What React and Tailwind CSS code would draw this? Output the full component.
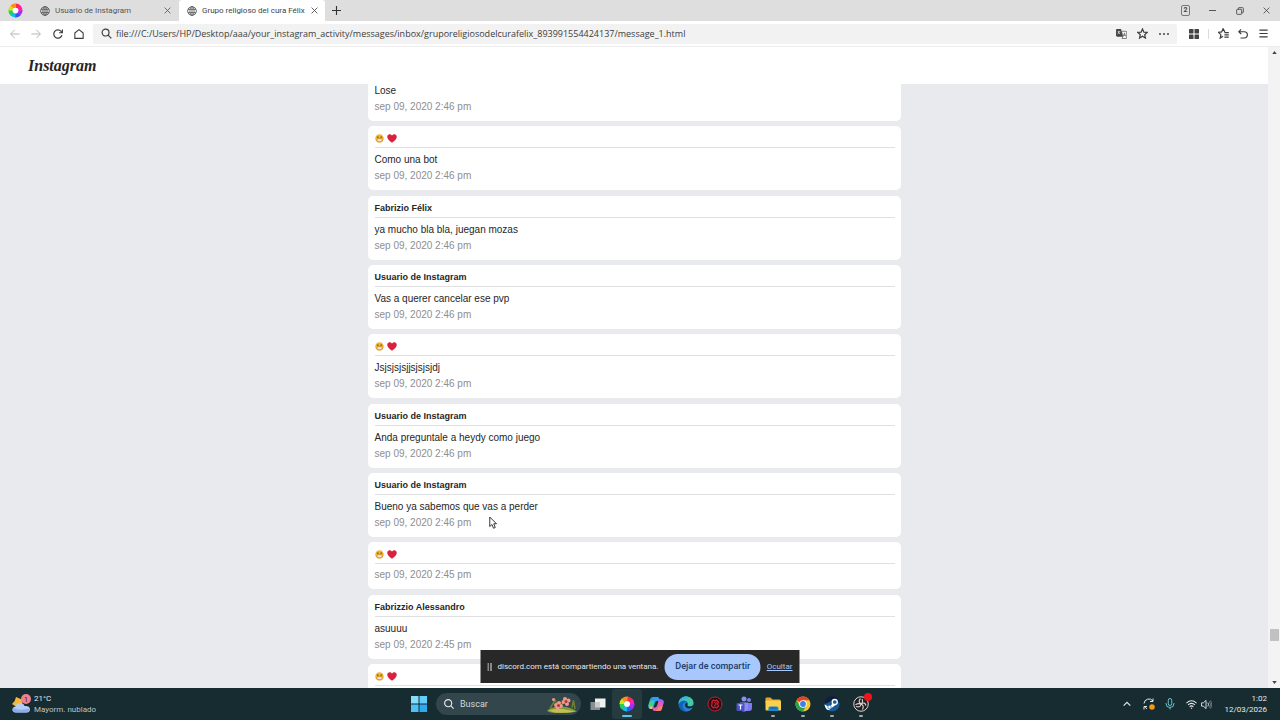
import React from "react";

const messages = [
  { text: "Lose", date: "sep 09, 2020 2:46 pm" },
  { sender: "😀❤", text: "Como una bot", date: "sep 09, 2020 2:46 pm" },
  { sender: "Fabrizio Félix", text: "ya mucho bla bla, juegan mozas", date: "sep 09, 2020 2:46 pm" },
  { sender: "Usuario de Instagram", text: "Vas a querer cancelar ese pvp", date: "sep 09, 2020 2:46 pm" },
  { sender: "😀❤", text: "Jsjsjsjsjjsjsjsjdj", date: "sep 09, 2020 2:46 pm" },
  { sender: "Usuario de Instagram", text: "Anda preguntale a heydy como juego", date: "sep 09, 2020 2:46 pm" },
  { sender: "Usuario de Instagram", text: "Bueno ya sabemos que vas a perder", date: "sep 09, 2020 2:46 pm" },
  { sender: "😀❤", date: "sep 09, 2020 2:45 pm" },
  { sender: "Fabrizzio Alessandro", text: "asuuuu", date: "sep 09, 2020 2:45 pm" },
  { sender: "😀❤" },
];

function Icon({ children, className = "size-3", box = "0 0 24 24", width = 2 }) {
  return (
    <svg viewBox={box} className={className} fill="none" stroke="currentColor" strokeWidth={width} aria-hidden="true">
      {children}
    </svg>
  );
}

const Globe = () => (
  <Icon className="size-[10px] shrink-0 text-[#555]" width={2}>
    <circle cx="12" cy="12" r="10.5" />
    <ellipse cx="12" cy="12" rx="5" ry="10.5" />
    <path d="M12 1.5v21M2.5 8h19M2.5 16h19" />
  </Icon>
);

const Cross = ({ className = "size-[7px]" }) => (
  <Icon className={className} width={2.8}>
    <path d="M2 2l20 20M22 2L2 22" />
  </Icon>
);

const BrowserLogo = ({ className = "size-4" }) => (
  <svg viewBox="0 0 32 32" className={className} aria-hidden="true">
    <g fill="none" strokeWidth="9">
      <path d="M16 5.5A10.5 10.5 0 0 1 24 9.2" stroke="#ff2a4d" />
      <path d="M23.4 8.6A10.5 10.5 0 0 1 26.5 17" stroke="#ff1fb4" />
      <path d="M26.5 16A10.5 10.5 0 0 1 22.8 24" stroke="#a92bf5" />
      <path d="M23.4 23.4A10.5 10.5 0 0 1 15 26.5" stroke="#3158f2" />
      <path d="M16 26.5A10.5 10.5 0 0 1 8 22.8" stroke="#13b9ef" />
      <path d="M8.6 23.4A10.5 10.5 0 0 1 5.5 15" stroke="#25d34a" />
      <path d="M5.5 16A10.5 10.5 0 0 1 9.2 8" stroke="#d5e021" />
      <path d="M8.6 8.6A10.5 10.5 0 0 1 17 5.5" stroke="#ff8d1d" />
    </g>
    <circle cx="16" cy="16" r="6" fill="#fff" />
  </svg>
);

const Grin = () => (
  <svg viewBox="0 0 20 20" className="size-[9px]" role="img" aria-label="cara sonriente">
    <circle cx="10" cy="10" r="9.5" fill="#f3b43c" />
    <path d="M4 6.5l3.5-1M16 6.5l-3.5-1" stroke="#7a501c" strokeWidth="1.4" />
    <circle cx="6.5" cy="8" r="1.3" fill="#5a3814" />
    <circle cx="13.5" cy="8" r="1.3" fill="#5a3814" />
    <rect x="4" y="11" width="12" height="5" rx="2.5" fill="#fff" stroke="#8a5c20" strokeWidth="1" />
  </svg>
);

const Heart = () => (
  <svg viewBox="0 0 20 18" className="h-[9px] w-[10px]" role="img" aria-label="corazón">
    <path d="M10 17.5C4 13 .5 9.500.5 5.500.5 2.500 2.700.5 5.300.5 7.300.5 9 1.600 10 3.300 11 1.600 12.700.5 14.700.5c2.600 0 4.800 2 4.800 5 0 4-3.500 7.500-9.500 12z" fill="#d8203f" />
  </svg>
);

function Message({ sender, text, date }) {
  return (
    <article className="shrink-0 rounded-[5px] bg-white pt-1.5 pr-1.5 pb-1.5 pl-[7px] first:-mt-[11px] last:-mb-[7px]">
      {sender && (
        <h2 className="flex h-4 items-start border-b border-[#dfe0e2] text-[9px] leading-3 font-bold text-[#262626]">
          {sender === "😀❤" ? (
            <span className="flex items-center gap-[3px] pt-0.5">
              <Grin />
              <Heart />
            </span>
          ) : (
            sender
          )}
        </h2>
      )}
      <div className="pt-[3px] text-[10px]">
        {text && <p className="leading-[17px] text-[#262626]">{text}</p>}
        {date && <p className="leading-4 text-[#8e8e8e]">{date}</p>}
      </div>
    </article>
  );
}

function TitleBar() {
  return (
    <div className="flex h-[21px] shrink-0 items-stretch bg-[#dedede] text-[8px] text-[#555]">
      <div className="flex w-[31px] items-center justify-center">
        <BrowserLogo className="size-[15px]" />
      </div>
      <div role="tablist" className="flex">
        <div className="flex w-[148px] items-center gap-[5px] pr-2 pl-[9px]">
          <Globe />
          <button role="tab" aria-selected="false" className="flex-1 text-left whitespace-nowrap">Usuario de Instagram</button>
          <button aria-label="Cerrar pestaña"><Cross /></button>
        </div>
        <div className="flex w-[146px] items-center gap-[5px] rounded-t-[3px] bg-white pr-[7px] pl-2 text-[#444]">
          <Globe />
          <button role="tab" aria-selected="true" className="flex-1 text-left whitespace-nowrap">Grupo religioso del cura Félix</button>
          <button aria-label="Cerrar pestaña"><Cross /></button>
        </div>
      </div>
      <button aria-label="Nueva pestaña" className="flex w-[22px] items-center justify-center text-[#333]">
        <Icon className="size-[9px]" width={3}><path d="M12 0v24M0 12h24" /></Icon>
      </button>
      <div className="ml-auto flex text-[#444]">
        <button aria-label="Pestañas" className="flex w-[27px] items-center justify-center">
          <span className="flex h-[11px] w-[9px] items-center justify-center rounded-[2px] border border-[#777] text-[7px] leading-none font-bold">2</span>
        </button>
        <button aria-label="Minimizar" className="flex w-[27px] items-center justify-center">
          <Icon className="size-[7px]" width={3}><path d="M0 12h24" /></Icon>
        </button>
        <button aria-label="Restaurar" className="flex w-[27px] items-center justify-center">
          <Icon className="size-[8px]" width={2.6}>
            <rect x="2" y="7" width="15" height="15" rx="2" />
            <path d="M7 7V4q0-2 2-2h11q2 0 2 2v11q0 2-2 2h-3" />
          </Icon>
        </button>
        <button aria-label="Cerrar" className="flex w-[27px] items-center justify-center"><Cross /></button>
      </div>
    </div>
  );
}

function Toolbar() {
  return (
    <div className="flex h-[26px] shrink-0 items-center border-b border-[#ececec] bg-white text-[#3d3d3d]">
      <div className="flex w-[93px] shrink-0 pl-1">
        <button aria-label="Atrás" className="flex w-[21px] justify-center text-[#b5b5b5]">
          <Icon className="size-[10px]" width={2.4}><path d="M23 12H2M11 2L1.500 12 11 22" /></Icon>
        </button>
        <button aria-label="Adelante" className="flex w-[22px] justify-center text-[#b5b5b5]">
          <Icon className="size-[10px]" width={2.4}><path d="M1 12h21M13 2l9.500 10L13 22" /></Icon>
        </button>
        <button aria-label="Recargar" className="flex w-[21px] justify-center">
          <Icon className="size-[10px]" width={2.8}><path d="M21.500 15A10 10 0 1 1 19.500 5.500L22 8M22.500 1v8h-8" /></Icon>
        </button>
        <button aria-label="Inicio" className="flex w-[22px] justify-center">
          <Icon className="size-[10px]" width={2.6}><path d="M2 22.500V9.500L12 1.500l10 8v13z" strokeLinejoin="round" /></Icon>
        </button>
      </div>
      <div className="flex h-[20px] min-w-0 flex-1 items-center gap-1 rounded-[2px] bg-[#f2f2f2] pr-1 pl-2">
        <Icon className="size-[11px] shrink-0" width={2.6}>
          <circle cx="10" cy="10" r="7.500" />
          <path d="M15.500 15.500L22.500 22.500" />
        </Icon>
        <input
          aria-label="Dirección"
          readOnly
          className="min-w-0 flex-1 bg-transparent font-['Open_Sans',sans-serif] text-[9px] leading-4 outline-none"
          value="file:///C:/Users/HP/Desktop/aaa/your_instagram_activity/messages/inbox/gruporeligiosodelcurafelix_893991554424137/message_1.html"
        />
        <button aria-label="Traducir" className="flex w-[17px] justify-center">
          <svg viewBox="0 0 24 22" className="h-[10px] w-[11px]" aria-hidden="true">
            <path d="M1 0h10l4 17H3q-3 0-3-3V1z" fill="#444" />
            <path d="M12 5h10q1.500 0 1.500 1.500v13q0 1.500-1.500 1.500H13l2-4z" fill="none" stroke="#555" strokeWidth="1.600" />
            <path d="M3.500 6h6M6.500 4v2q0 4-3 5M5 7q1 3 4 4" stroke="#fff" strokeWidth="1.300" fill="none" />
            <path d="M16 16l2.500-7 2.500 7M17 14h3" stroke="#444" strokeWidth="1.400" fill="none" />
          </svg>
        </button>
        <button aria-label="Favorito" className="flex w-[17px] justify-center">
          <Icon className="size-[11px]" width={2.6}>
            <path d="M12 2l3 7 7.500.6-5.700 5 1.700 7.400-6.500-4-6.500 4 1.700-7.400-5.700-5L9 9z" />
          </Icon>
        </button>
        <button aria-label="Más" className="flex w-[18px] justify-center">
          <svg viewBox="0 0 20 4" className="h-0.5 w-[10px]" fill="#444" aria-hidden="true">
            <circle cx="2" cy="2" r="2" /><circle cx="10" cy="2" r="2" /><circle cx="18" cy="2" r="2" />
          </svg>
        </button>
      </div>
      <div className="flex w-[103px] shrink-0 items-center pl-[7px]">
        <button aria-label="Extensiones" className="flex w-5 justify-center">
          <svg viewBox="0 0 20 20" className="size-[10px]" fill="#444" aria-hidden="true">
            <rect width="9" height="9" rx="1" /><rect x="11" width="9" height="9" rx="1" />
            <rect y="11" width="9" height="9" rx="1" /><rect x="11" y="11" width="9" height="9" rx="1" />
          </svg>
        </button>
        <span className="ml-1 h-[10px] w-px bg-[#dcdcdc]" />
        <button aria-label="Lista de favoritos" className="ml-1 flex w-5 justify-center">
          <Icon className="size-[11px]" width={2.6}>
            <path d="M15 8.500L11 1.500 8 8.500.8 9.500l5.500 5L4.800 22l6.200-4M14 10h9.500M14 15h9.500M14 20h9.500" />
          </Icon>
        </button>
        <button aria-label="Deshacer" className="flex w-5 justify-center">
          <Icon className="size-[10px]" width={2.8}>
            <path d="M7.500 1L2 6.500 7.500 12M2 6.500h13a7.500 7.500 0 0 1 0 15H6" />
          </Icon>
        </button>
        <button aria-label="Menú" className="flex w-5 justify-center">
          <Icon className="size-[9px]" width={3}><path d="M1 3h22M1 12h22M1 21h22" /></Icon>
        </button>
      </div>
    </div>
  );
}

function PageScrollbar() {
  return (
    <div className="flex w-3 shrink-0 flex-col items-center bg-[#f3f3f3] py-1">
      <svg viewBox="0 0 6 4" className="h-[3px] w-[5px] shrink-0" fill="#444" aria-hidden="true"><path d="M3 0l3 4H0z" /></svg>
      <div className="flex-[574]" />
      <div className="h-3 w-[9px] shrink-0 bg-[#c1c1c1]" />
      <div className="flex-[40]" />
      <svg viewBox="0 0 6 4" className="h-[3px] w-[5px] shrink-0" fill="#444" aria-hidden="true"><path d="M0 0h6L3 4z" /></svg>
    </div>
  );
}

function ShareBar() {
  return (
    <div className="absolute bottom-[5px] left-1/2 flex h-[33px] w-[319px] -translate-x-1/2 items-center bg-[#282828] px-[7px] text-[8px] whitespace-nowrap text-[#e8e8e8]">
      <svg viewBox="0 0 5 8" className="h-2 w-[5px] shrink-0" fill="#e8e8e8" aria-hidden="true"><path d="M0 0h1v8H0zM3 0h1v8H3z" /></svg>
      <p className="ml-[5px]">discord.com está compartiendo una ventana.</p>
      <div className="ml-auto flex items-center gap-1.5">
        <button className="h-[26px] w-24 rounded-full bg-[#a8c7fa] text-[9px] font-medium text-[#1b3a6b]">Dejar de compartir</button>
        <a href="#ocultar" className="text-[#a8c7fa] underline">Ocultar</a>
      </div>
    </div>
  );
}

const apps = [
  {
    name: "Vista de tareas",
    art: (
      <g>
        <path d="M10 5h21v18H10z" fill="#f1f1f1" />
        <path d="M1 12h19v16H1z" fill="#888e90" />
        <path d="M10 12h10v11H10z" fill="#c9cccd" />
      </g>
    ),
  },
  { name: "Navegador", logo: true, active: true },
  {
    name: "Copilot",
    art: (
      <g>
        <path d="M10 2h9q3 0 4 4l1 4h-6q-3 0-4 4l-3 9q-1 3-4 3-8 0-6-8l3-11q1-5 6-5z" fill="#2c9ff0" />
        <path d="M2 15l3-6h8l-4 14q-8 2-8-4z" fill="#3fd08c" />
        <path d="M2 21h8l-2 5q-6 1-6-5z" fill="#f6c83a" />
        <path d="M22 30h-9q-3 0-4-4l-1-3h6q3 0 4-4l3-9q1-3 4-3 8 0 6 8l-3 10q-1 5-6 5z" fill="#e75cb5" />
        <path d="M29 19l-1 6q-1 5-6 5h-7q4-3 6-8z" fill="#f4855c" />
        <path d="M20 11l2-4q9-2 9 5l-1 5q-2-6-7-6z" fill="#9a67ef" />
      </g>
    ),
  },
  {
    name: "Edge",
    art: (
      <g>
        <circle cx="16" cy="16" r="15" fill="#1a86d9" />
        <path d="M1 15C2 6 9 1 16 1c9 0 15 6 15 12 0 5-4 8-8 8-3 0-5-1-4-3 2-6-2-9-7-9-6 0-10 3-11 6z" fill="#43c9a4" />
        <path d="M1 15C2 6 9 1 16 1c4 0 7 1 10 4C16 3 7 6 1 15z" fill="#36b5e5" />
        <path d="M11 14c-5 8 1 17 10 16C14 33 4 29 2 21c-1-7 5-11 10-11 4 0 7 2 7 6-2-4-6-4-8-2z" fill="#1260b2" />
        <path d="M12 17c0 8 9 10 17 6-2 4-5 6-8 7-7 1-12-6-9-13z" fill="#2f7fd3" />
        <path d="M19 18c-1 3 6 4 10 1l2 3c-6 5-17 3-17-4 0-3 3-5 5-3z" fill="#172c30" />
      </g>
    ),
  },
  {
    name: "Juegos",
    art: (
      <g fill="none" stroke="#d71f34">
        <circle cx="16" cy="16" r="14" fill="#230f13" strokeWidth="1.800" />
        <path d="M10 11l3-3 3 2 3-2 4 4-2 4 2 4-4 4-3-2-3 2-4-4 1-4z" strokeWidth="2.600" />
        <path d="M14 12l5 4-5 4M19 12l-4 8" strokeWidth="1.800" />
      </g>
    ),
  },
  {
    name: "Teams",
    art: (
      <g>
        <circle cx="26" cy="8" r="4" fill="#7b83eb" />
        <circle cx="16" cy="6" r="5" fill="#8b91f2" />
        <path d="M21 14h11v10q0 6-6 6h-5z" fill="#7d79ee" />
        <path d="M8 13h16v10q0 8-8 8-8 0-8-8z" fill="#8d8cf5" />
        <rect x="1" y="14" width="16" height="16" rx="2" fill="#4950c8" />
        <path d="M5 18h8M9 18v9" stroke="#fff" strokeWidth="2.400" />
      </g>
    ),
  },
  {
    name: "Explorador de archivos",
    running: true,
    art: (
      <g>
        <path d="M1 5q0-2 2-2h8l4 4h14q2 0 2 2v5H1z" fill="#e2a52d" />
        <rect x="1" y="9" width="31" height="20" rx="2" fill="#fbd050" />
        <path d="M7 30v-6q0-3 3-3h14q3 0 3 3v6z" fill="#1d86cb" />
        <path d="M11 24h12" stroke="#125f9b" strokeWidth="2" />
      </g>
    ),
  },
  {
    name: "Chrome",
    running: true,
    art: (
      <g>
        <circle cx="16" cy="16" r="15" fill="#f7c52d" />
        <path d="M16 16L3 8.500A15 15 0 0 1 29 8.500H16z" fill="#e34133" />
        <path d="M3 8.500A15 15 0 0 0 16 31l6.500-11.300L16 16l-6.500 3.700z" fill="#2ba14d" />
        <circle cx="16" cy="16" r="7.500" fill="#fff" />
        <circle cx="16" cy="16" r="5.800" fill="#3d7ee8" />
      </g>
    ),
  },
  {
    name: "Steam",
    running: true,
    art: (
      <g>
        <circle cx="16" cy="16" r="15" fill="#155a99" />
        <path d="M1 16A15 15 0 0 1 31 14Q24 4 16 9T1 16z" fill="#101e3b" />
        <path d="M1 17l10 5 6-7 6 3-8 6-5 4q-5 1-8-7z" fill="#fff" />
        <circle cx="21.500" cy="12" r="5" fill="#155a99" stroke="#fff" strokeWidth="2.600" />
        <circle cx="11" cy="22" r="3.500" fill="#fff" stroke="#155a99" strokeWidth="1.200" />
      </g>
    ),
  },
  {
    name: "OBS Studio",
    running: true,
    recording: true,
    art: (
      <g fill="none" stroke="#d7d7d7">
        <circle cx="16" cy="16" r="14.500" fill="#231f20" strokeWidth="2" />
        <path d="M15 5q-6 6 1 11 8-5 10 3M16 16q-1 8-10 5M16 16q7 3 3 11M16 16q-8-2-11 2M16 16q5-4 2-10" strokeWidth="2.200" />
      </g>
    ),
  },
];

function Taskbar() {
  return (
    <footer className="grid h-8 shrink-0 grid-cols-[1fr_auto_1fr] items-center bg-[#172c30] text-[8px] text-[#e6eaeb]">
      <div className="flex items-center gap-[3px] pl-3">
        <svg viewBox="0 0 38 40" className="h-5 w-[19px]" aria-hidden="true">
          <path d="M8 6q-1 8-8 14l6 4h12l4-12z" fill="#f5b63b" />
          <path d="M8 37q-7 0-7-6 0-5 6-6 2-8 10-7 6 0 8 6 10-1 11 6 0 7-7 7z" fill="#b4cdf4" />
          <path d="M8 37q-7 0-7-6 0-2 2-3 10 6 32 1 0 8-6 8z" fill="#8caee8" />
          <circle cx="28" cy="10" r="10" fill="#f0808d" />
          <text x="24" y="15" fontSize="14" fill="#2c1a1d">1</text>
        </svg>
        <div className="leading-[11px]">
          <p>21°C</p>
          <p className="text-[#b9c4c6]">Mayorm. nublado</p>
        </div>
      </div>
      <div className="flex items-center gap-0.5">
        <button aria-label="Inicio" className="flex w-[30px] justify-center">
          <svg viewBox="0 0 32 32" className="size-4" aria-hidden="true">
            <path d="M0 0h15v15H0z" fill="#86dcfb" /><path d="M17 0h15v15H17z" fill="#62cdf8" />
            <path d="M0 17h15v15H0z" fill="#4cc1f5" /><path d="M17 17h15v15H17z" fill="#2da9ee" />
          </svg>
        </button>
        <label className="flex h-[22px] w-[145px] items-center gap-1.5 overflow-hidden rounded-full bg-[#32464b] pr-1 pl-2">
          <Icon className="size-[10px] shrink-0" width={2.8}>
            <circle cx="10" cy="10" r="8.500" /><path d="M16 16l7 7" />
          </Icon>
          <input aria-label="Buscar" placeholder="Buscar" className="h-4 min-w-0 flex-1 bg-transparent text-[9px] leading-4 outline-none placeholder:text-[#d3dadb]" />
          <svg viewBox="0 0 60 34" className="h-[17px] w-[30px] shrink-0" aria-hidden="true">
            <path d="M0 29q12-9 30-8t30 10q-15 4-42 3-16-1-18-5z" fill="#7d9b3e" />
            <path d="M3 29q14-5 28-3t26 5q-20 4-42 2z" fill="#c5bd55" />
            <path d="M6 25l10-17 6 12M50 23l3-14 3 17M29 17l7-13" stroke="#6f7f35" strokeWidth="3" fill="none" />
            <g fill="#f19a86">
              <circle cx="24" cy="14" r="4" /><circle cx="18" cy="18" r="4" /><circle cx="28" cy="20" r="4" /><circle cx="21" cy="23" r="4" />
              <circle cx="36" cy="6" r="4" /><circle cx="43" cy="9" r="4" /><circle cx="40" cy="16" r="4" /><circle cx="33" cy="12" r="4" />
              <circle cx="13" cy="7" r="3" />
            </g>
            <circle cx="23" cy="19" r="3" fill="#a93e44" /><circle cx="38" cy="11" r="3" fill="#a93e44" />
          </svg>
        </label>
        <nav aria-label="Aplicaciones" className="flex w-[293px]">
          {apps.map((app) => (
            <button
              key={app.name}
              aria-label={app.name}
              className={`relative flex h-[30px] flex-1 items-center justify-center rounded-[3px] ${app.active ? "bg-[#263b40]" : ""}`}
            >
              {app.logo ? <BrowserLogo className="size-4" /> : <svg viewBox="0 0 32 32" className="size-4" aria-hidden="true">{app.art}</svg>}
              {app.recording && <span className="absolute top-1 right-1 size-2 rounded-full bg-[#f0141e]" />}
              {app.active && <span className="absolute bottom-0.5 h-0.5 w-[10px] rounded-full bg-[#5fc3ee]" />}
              {app.running && <span className="absolute bottom-0.5 h-0.5 w-1 rounded-full bg-[#a3adaf]" />}
            </button>
          ))}
        </nav>
      </div>
      <div className="flex items-center justify-end pr-[13px]">
        <button aria-label="Mostrar iconos ocultos" className="flex w-[22px] justify-center">
          <Icon className="size-2" width={3.4}><path d="M2 17L12 7l10 10" /></Icon>
        </button>
        <button aria-label="Actualización" className="flex w-[22px] justify-center">
          <Icon className="size-3" width={2}>
            <path d="M2 11A10 10 0 0 1 20 6M20 1v6h-6M2 23v-6h6M3 17q2 3 5 4.500" />
            <circle cx="18" cy="18" r="5.500" fill="#f39a19" stroke="none" />
          </Icon>
        </button>
        <button aria-label="Micrófono" className="flex w-5 justify-center text-[#69c3cf]">
          <Icon className="size-3" width={2}>
            <rect x="8.500" y="1" width="7" height="14" rx="3.500" />
            <path d="M4 10v1a8 8 0 0 0 16 0v-1M12 19v4" />
          </Icon>
        </button>
        <button aria-label="Red y volumen" className="flex items-center gap-1 pl-1.5">
          <Icon className="size-[11px]" width={2.2}>
            <path d="M1 9q11-10 22 0M4.500 13q7.500-7 15 0M8 17q4-4 8 0" />
            <circle cx="12" cy="20" r="1.500" fill="currentColor" stroke="none" />
          </Icon>
          <Icon className="size-[11px]" width={2}>
            <path d="M1 8.500h4l6-5.500v18l-6-5.500H1zM15 8q3 4 0 8" />
            <path d="M18 5q5.500 7 0 14M21 3q5 9 0 18" opacity=".45" />
          </Icon>
        </button>
        <div className="ml-3 text-right leading-[11px]">
          <p>1:02</p>
          <p>12/03/2026</p>
        </div>
      </div>
    </footer>
  );
}

export default function App() {
  return (
    <div className="flex h-screen flex-col overflow-hidden bg-white font-['Roboto',sans-serif]">
      <TitleBar />
      <Toolbar />
      <div className="relative flex min-h-0 flex-1">
        <div className="flex min-w-0 flex-1 flex-col bg-[#e9eaed] font-['Liberation_Sans',Arial,sans-serif]">
          <header className="flex h-[37px] shrink-0 items-center bg-white pl-7">
            <h1 className="font-['Liberation_Serif',serif] text-[16px] leading-5 font-bold text-[#262626] italic">Instagram</h1>
          </header>
          <main className="mx-auto flex min-h-0 w-full max-w-[533px] flex-1 flex-col justify-between overflow-hidden">
            {messages.map((message, index) => (
              <Message key={index} {...message} />
            ))}
          </main>
        </div>
        <PageScrollbar />
        <ShareBar />
        <svg viewBox="0 0 16 26" className="absolute top-[469px] left-[489px] h-[13px] w-2" aria-hidden="true">
          <path d="M1.500 2v19l4.500-4 3 7.500 3.500-1.500-3-7.500h5.500z" fill="#fff" stroke="#222" strokeWidth="1.800" />
        </svg>
      </div>
      <Taskbar />
    </div>
  );
}
